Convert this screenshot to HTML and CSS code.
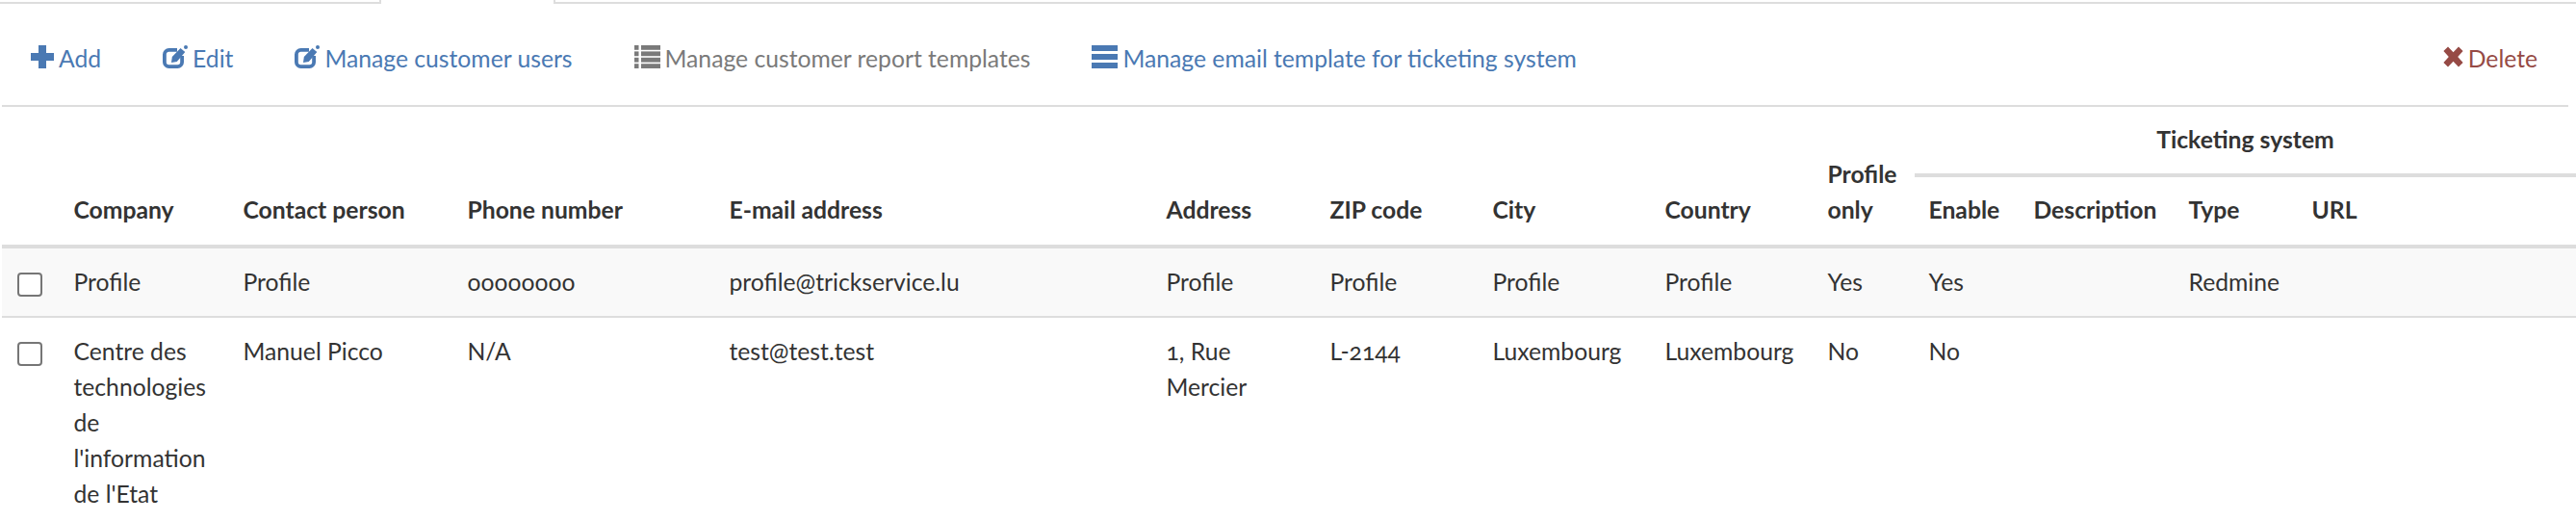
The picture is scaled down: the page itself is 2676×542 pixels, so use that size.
FILE: index.html
```html
<!DOCTYPE html>
<html lang="en">
<head>
<meta charset="utf-8">
<title>Customers</title>
<link rel="stylesheet" href="styles.css">
</head>
<body>
<div class="tabs"><div class="tab-left"></div><div class="tab-active"></div><div class="tab-right"></div></div>
<nav class="toolbar">
  <a class="tool blue"><svg class="ico ico-plus" viewBox="0 0 24 24"><path d="M8 0h8v8h8v8h-8v8H8v-8H0V8h8z" fill="currentColor"/></svg><span>Add</span></a>
  <a class="tool blue"><svg class="ico ico-edit" viewBox="0 0 26 24"><path d="M15 4.9H6.5a4.6 4.6 0 0 0-4.6 4.6v8a4.6 4.6 0 0 0 4.6 4.6h9a4.6 4.6 0 0 0 4.6-4.6V11" fill="none" stroke="currentColor" stroke-width="3.8"/><path d="M9 18l.8-6L18.5 3l4.8 4L14.8 17z" fill="currentColor"/><circle cx="24" cy="2" r="2" fill="currentColor"/></svg><span>Edit</span></a>
  <a class="tool blue"><svg class="ico ico-edit" viewBox="0 0 26 24"><path d="M15 4.9H6.5a4.6 4.6 0 0 0-4.6 4.6v8a4.6 4.6 0 0 0 4.6 4.6h9a4.6 4.6 0 0 0 4.6-4.6V11" fill="none" stroke="currentColor" stroke-width="3.8"/><path d="M9 18l.8-6L18.5 3l4.8 4L14.8 17z" fill="currentColor"/><circle cx="24" cy="2" r="2" fill="currentColor"/></svg><span>Manage customer users</span></a>
  <a class="tool gray"><svg class="ico ico-list" viewBox="0 0 27 24" fill="currentColor"><rect x="0" y="0" width="4.5" height="4.8"/><rect x="7" y="0" width="20" height="4.8"/><rect x="0" y="6.4" width="4.5" height="4.8"/><rect x="7" y="6.4" width="20" height="4.8"/><rect x="0" y="12.8" width="4.5" height="4.8"/><rect x="7" y="12.8" width="20" height="4.8"/><rect x="0" y="19.2" width="4.5" height="4.8"/><rect x="7" y="19.2" width="20" height="4.8"/></svg><span>Manage customer report templates</span></a>
  <a class="tool blue"><svg class="ico ico-list" viewBox="0 0 27 24" fill="currentColor"><rect x="0" y="0" width="27" height="6"/><rect x="0" y="9" width="27" height="6"/><rect x="0" y="18" width="27" height="6"/></svg><span>Manage email template for ticketing system</span></a>
  <a class="tool red push"><svg class="ico ico-x" viewBox="0 0 21 22"><path d="M5 .5l5.5 5.8L16 .5 20.6 5l-5.4 6 5.4 6-4.6 4.5-5.5-5.8L5 21.5.4 17l5.4-6L.4 5z" fill="currentColor"/></svg><span>Delete</span></a>
</nav>
<table class="grid">
  <colgroup>
    <col class="c-check"><col class="c-company"><col class="c-contact"><col class="c-phone"><col class="c-email"><col class="c-address"><col class="c-zip"><col class="c-city"><col class="c-country"><col class="c-only"><col class="c-enable"><col class="c-desc"><col class="c-type"><col class="c-url">
  </colgroup>
  <thead>
    <tr>
      <th rowspan="2"></th>
      <th rowspan="2">Company</th>
      <th rowspan="2">Contact person</th>
      <th rowspan="2">Phone number</th>
      <th rowspan="2">E-mail address</th>
      <th rowspan="2">Address</th>
      <th rowspan="2">ZIP code</th>
      <th rowspan="2">City</th>
      <th rowspan="2">Country</th>
      <th rowspan="2">Profile only</th>
      <th colspan="4" class="group">Ticketing system</th>
    </tr>
    <tr>
      <th>Enable</th>
      <th>Description</th>
      <th>Type</th>
      <th>URL</th>
    </tr>
  </thead>
  <tbody>
    <tr class="striped">
      <td><input class="check" type="checkbox"></td>
      <td>Profile</td>
      <td>Profile</td>
      <td>oooooooo</td>
      <td>profile@trickservice.lu</td>
      <td>Profile</td>
      <td>Profile</td>
      <td>Profile</td>
      <td>Profile</td>
      <td>Yes</td>
      <td>Yes</td>
      <td></td>
      <td>Redmine</td>
      <td></td>
    </tr>
    <tr>
      <td><input class="check" type="checkbox"></td>
      <td>Centre des technologies de l'information de l'Etat</td>
      <td>Manuel Picco</td>
      <td>N/A</td>
      <td>test@test.test</td>
      <td>1, Rue Mercier</td>
      <td>L-2144</td>
      <td>Luxembourg</td>
      <td>Luxembourg</td>
      <td>No</td>
      <td>No</td>
      <td></td>
      <td></td>
      <td></td>
    </tr>
  </tbody>
</table>
</body>
</html>
```
FILE: styles.css
```css
html, body { margin: 0; padding: 0; height: 542px; overflow: hidden; background: #fff; }
body { font-family: "Lato", "Open Sans", sans-serif; font-size: 24.7px; line-height: 37px; color: #333; font-variant-numeric: oldstyle-nums; }

.tabs { display: flex; height: 4px; }
.tab-left { width: 396px; border-bottom: 2px solid #ddd; border-right: 2px solid #ddd; box-sizing: border-box; }
.tab-active { width: 179px; }
.tab-right { flex: 1; border-bottom: 2px solid #ddd; border-left: 2px solid #ddd; box-sizing: border-box; }

.toolbar { display: flex; gap: 64px; margin: 0 8px 0 2px; padding: 43px 32px 38px 30px; border-bottom: 2px solid #ddd; height: 24px; align-items: center; box-sizing: content-box; }
.tool { display: flex; align-items: center; gap: 5px; white-space: nowrap; }
.tool span { position: relative; top: 1px; }
.push { margin-left: auto; }
.blue { color: #4a79b3; }
.gray { color: #7a7a7a; }
.red { color: #964a45; }
.ico { height: 24px; display: block; flex: none; }
.ico-plus { width: 24px; }
.ico-edit { width: 26px; }
.ico-list { width: 27px; }
.ico-x { width: 21px; height: 22px; }

.grid { width: 2674px; margin-left: 2px; table-layout: fixed; border-collapse: separate; border-spacing: 0; }
.c-check { width: 60px; }
.c-company { width: 176px; }
.c-contact { width: 233px; }
.c-phone { width: 272px; }
.c-email { width: 454px; }
.c-address { width: 170px; }
.c-zip { width: 169px; }
.c-city { width: 179px; }
.c-country { width: 169px; }
.c-only { width: 105px; }
.c-enable { width: 109px; }
.c-desc { width: 161px; }
.c-type { width: 128px; }
.c-url { width: 289px; }

th { font-weight: 700; text-align: left; vertical-align: bottom; padding: 15px 15px 18px 14.5px; border-bottom: 4px solid #ddd; }
th.group { text-align: center; padding: 15px 15px 17px; }
td { vertical-align: top; padding: 15.5px 15px 17.5px 14.5px; }
.striped td { background: #f9f9f9; border-bottom: 2px solid #ddd; }

.check { appearance: none; display: block; box-sizing: border-box; width: 26px; height: 25px; margin: 9px 0 0 1.5px; background: #fff; border: 2px solid #767676; border-radius: 4px; }
```
